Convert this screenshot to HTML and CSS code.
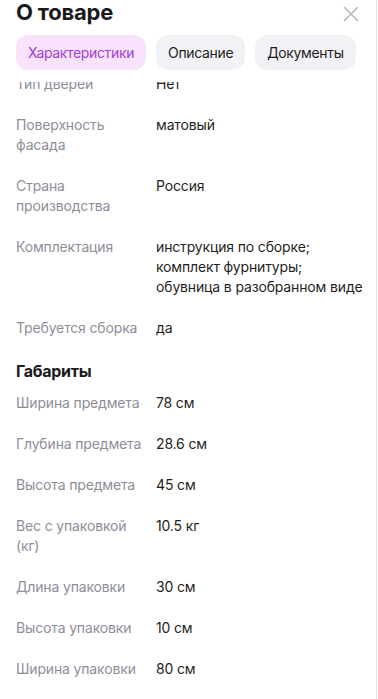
FILE: index.html
```html
<!DOCTYPE html>
<html lang="ru">
<head>
<meta charset="utf-8">
<link rel="stylesheet" href="styles.css">
</head>
<body>
<div class="sheet">
  <header class="head">
    <div class="title-row">
      <h1 class="title">О товаре</h1>
      <button class="close" aria-label="Закрыть">
        <svg width="16" height="16" viewBox="0 0 16 16"><path d="M1.5 1.5 L14.5 14.5 M14.5 1.5 L1.5 14.5" stroke="#b9b9c1" stroke-width="1.6" stroke-linecap="round" fill="none"/></svg>
      </button>
    </div>
    <nav class="tabs">
      <span class="tab tab-active">Характеристики</span>
      <span class="tab">Описание</span>
      <span class="tab">Документы</span>
    </nav>
  </header>
  <div class="scroll">
    <div class="list">
      <div class="row"><div class="label">Тип дверей</div><div class="value">Нет</div></div>
      <div class="row"><div class="label">Поверхность фасада</div><div class="value">матовый</div></div>
      <div class="row"><div class="label">Страна производства</div><div class="value">Россия</div></div>
      <div class="row"><div class="label">Комплектация</div><div class="value">инструкция по сборке;<br>комплект фурнитуры;<br>обувница в разобранном виде</div></div>
      <div class="row"><div class="label">Требуется сборка</div><div class="value">да</div></div>
      <h2 class="section">Габариты</h2>
      <div class="row"><div class="label">Ширина предмета</div><div class="value">78 см</div></div>
      <div class="row"><div class="label">Глубина предмета</div><div class="value">28.6 см</div></div>
      <div class="row"><div class="label">Высота предмета</div><div class="value">45 см</div></div>
      <div class="row"><div class="label">Вес с упаковкой (кг)</div><div class="value">10.5 кг</div></div>
      <div class="row"><div class="label">Длина упаковки</div><div class="value">30 см</div></div>
      <div class="row"><div class="label">Высота упаковки</div><div class="value">10 см</div></div>
      <div class="row"><div class="label">Ширина упаковки</div><div class="value">80 см</div></div>
    </div>
  </div>
</div>
</body>
</html>
```
FILE: styles.css
```css
* { box-sizing: border-box; }
html, body { margin: 0; padding: 0; background: #fff; }
body {
  font-family: Inter, "Noto Sans", sans-serif;
  color: #1f1f22;
  width: 378px;
  height: 699px;
  overflow: hidden;
}
.sheet {
  width: 377px;
  height: 699px;
  border-right: 1px solid #e6e6ea;
  display: flex;
  flex-direction: column;
}
.head {
  padding: 0 16px 12px 16px;
  flex: none;
  background: #fff;
}
.title-row {
  display: flex;
  justify-content: space-between;
  align-items: flex-start;
}
.title {
  margin: 0;
  font-size: 22px;
  line-height: 24px;
  font-weight: 700;
  color: #1a1a1c;
  letter-spacing: -0.2px;
}
.close {
  border: 0;
  background: none;
  padding: 0;
  margin: 6px 1px 0 0;
  width: 16px;
  height: 16px;
  display: block;
}
.close svg { display: block; }
.tabs {
  display: flex;
  gap: 10px;
  margin-top: 11px;
}
.tab {
  height: 35px;
  padding: 0 12px;
  border-radius: 12px;
  background: #f2f1f6;
  font-size: 14px;
  line-height: 35px;
  letter-spacing: -0.35px;
  color: #1f1f22;
  white-space: nowrap;
}
.tab-active {
  background: #f9e3fc;
  color: #a240d4;
}
.scroll {
  flex: 1;
  overflow: hidden;
}
.list {
  margin-top: -8px;
  padding: 0 8px 0 16px;
  display: flex;
  flex-direction: column;
  gap: 21px;
}
.row {
  display: grid;
  grid-template-columns: 128px 1fr;
  column-gap: 12px;
  font-size: 14px;
  line-height: 20px;
  letter-spacing: -0.15px;
}
.label { color: #8e8e99; }
.value { color: #1f1f22; }
.section {
  margin: 0 0 -11px 0;
  font-size: 16px;
  line-height: 24px;
  font-weight: 700;
  color: #1a1a1c;
  letter-spacing: -0.3px;
}
```
